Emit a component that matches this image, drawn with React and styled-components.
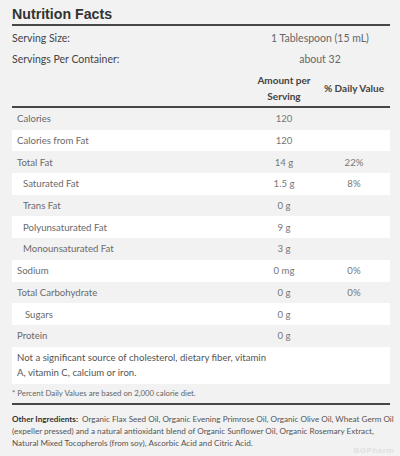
import React from "react";
import styled, { createGlobalStyle } from "styled-components";

const GlobalStyle = createGlobalStyle`
  html, body {
    margin: 0;
    padding: 0;
    background: #f2f2f2;
  }
  body {
    font-family: Lato, "Open Sans", Arial, sans-serif;
  }
`;

const Page = styled.div`
  position: relative;
  width: 378px;
  height: 456px;
  padding: 0 10px 0 12px;
  background: #f2f2f2;
  color: #555;
  overflow: hidden;
`;

const Title = styled.h2`
  margin: 0;
  padding-top: 5px;
  height: 19px;
  font-family: "Liberation Sans", Arial, sans-serif;
  font-size: 14.2px;
  font-weight: 700;
  color: #333;
  line-height: 19px;
`;

const Rule = styled.div`
  height: 2px;
  background: #474747;
  margin-top: ${(p) => p.$top || 0}px;
`;

const ServingRow = styled.div`
  display: grid;
  grid-template-columns: 238px 140px;
  align-items: center;
  height: 21px;
  font-size: 10.5px;
  color: #444;
`;

const ServingValue = styled.span`
  text-align: center;
  color: #666;
`;

const Grid = styled.div`
  display: grid;
  grid-template-columns: 238px 68px 72px;
  align-items: center;
`;

const HeaderRow = styled(Grid)`
  height: 37px;
  font-size: 10px;
  font-weight: 700;
  color: #444;
  line-height: 16px;
  text-align: center;
`;

const Row = styled(Grid)`
  height: 21.7px;
  background: ${(p) => (p.$white ? "#fff" : "transparent")};
  font-size: 9.6px;
  color: #6a6a6a;
`;

const Label = styled.span`
  padding-left: ${(p) => 5 + (p.$indent || 0)}px;
`;

const Cell = styled.span`
  text-align: center;
  color: #777;
`;

const Note = styled.div`
  background: #fff;
  padding: 3px 5px 4px;
  font-size: 9.6px;
  line-height: 15px;
  color: #555;
`;

const Footnote = styled.div`
  margin-top: 3px;
  font-size: 7.8px;
  color: #666;
  height: 13px;
  line-height: 13px;
`;

const Ingredients = styled.div`
  margin-top: 8px;
  font-size: 8.15px;
  line-height: 12px;
  color: #555;
`;

const Line = styled.div`
  white-space: nowrap;
`;

const Strong = styled.strong`
  font-weight: 700;
  color: #333;
  margin-right: 4px;
`;

const Watermark = styled.span`
  position: absolute;
  right: 6px;
  bottom: 1px;
  font-family: "Liberation Sans", Arial, sans-serif;
  font-size: 8px;
  font-weight: 700;
  letter-spacing: 0.5px;
  line-height: 9px;
  color: #e0e0e0;
`;

const rows = [
  ["Calories", "120", "", 0],
  ["Calories from Fat", "120", "", 0],
  ["Total Fat", "14 g", "22%", 0],
  ["Saturated Fat", "1.5 g", "8%", 6],
  ["Trans Fat", "0 g", "", 6],
  ["Polyunsaturated Fat", "9 g", "", 6],
  ["Monounsaturated Fat", "3 g", "", 6],
  ["Sodium", "0 mg", "0%", 0],
  ["Total Carbohydrate", "0 g", "0%", 0],
  ["Sugars", "0 g", "", 8],
  ["Protein", "0 g", "", 0],
];

export default function App() {
  return (
    <Page>
      <GlobalStyle />
      <Title>Nutrition Facts</Title>
      <Rule />
      <ServingRow style={{ marginTop: 1 }}>
        <span>Serving Size:</span>
        <ServingValue>1 Tablespoon (15 mL)</ServingValue>
      </ServingRow>
      <ServingRow>
        <span>Servings Per Container:</span>
        <ServingValue>about 32</ServingValue>
      </ServingRow>
      <HeaderRow>
        <span />
        <span>
          Amount per
          <br />
          Serving
        </span>
        <span>% Daily Value</span>
      </HeaderRow>
      <Rule />
      {rows.map(([label, amount, dv, indent], i) => (
        <Row key={label} $white={i % 2 === 1}>
          <Label $indent={indent}>{label}</Label>
          <Cell>{amount}</Cell>
          <Cell>{dv}</Cell>
        </Row>
      ))}
      <Note>
        Not a significant source of cholesterol, dietary fiber, vitamin
        <br />
        A, vitamin C, calcium or iron.
      </Note>
      <Footnote>* Percent Daily Values are based on 2,000 calorie diet.</Footnote>
      <Rule $top={3} />
      <Ingredients>
        <Line>
          <Strong>Other Ingredients:</Strong>Organic Flax Seed Oil, Organic
          Evening Primrose Oil, Organic Olive Oil, Wheat Germ Oil
        </Line>
        <Line>
          (expeller pressed) and a natural antioxidant blend of Organic
          Sunflower Oil, Organic Rosemary Extract,
        </Line>
        <Line>
          Natural Mixed Tocopherols (from soy), Ascorbic Acid and Citric Acid.
        </Line>
      </Ingredients>
      <Watermark>BGPharm</Watermark>
    </Page>
  );
}
